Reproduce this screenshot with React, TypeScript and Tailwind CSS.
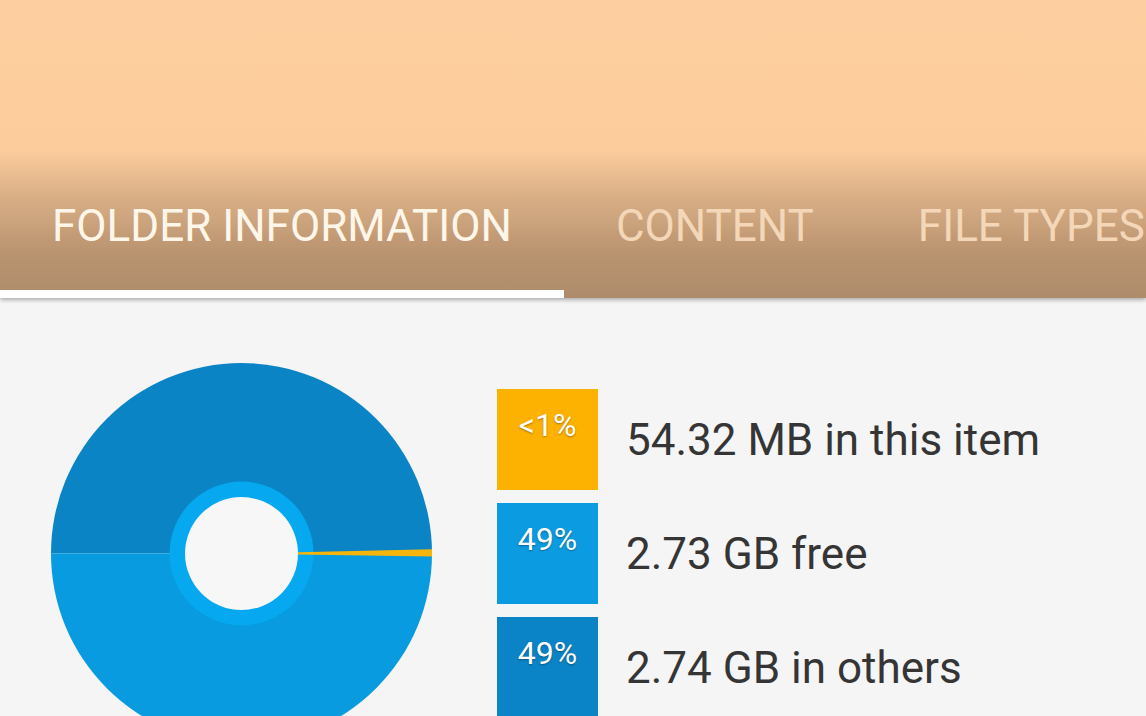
import React from "react";

const font = { fontFamily: "Roboto, 'Liberation Sans', sans-serif" };

function Donut() {
  const cx = 190.5;
  const cy = 190.5;
  const r = 190.5;
  const ri = 56.5;
  const a1 = (-1.3 * Math.PI) / 180;
  const a2 = (0.9 * Math.PI) / 180;
  const p = (rad: number, a: number) => `${cx + rad * Math.cos(a)} ${cy + rad * Math.sin(a)}`;
  return (
    <svg width="381" height="381" viewBox="0 0 381 381" className="shrink-0">
      <path d={`M0 ${cy} A${r} ${r} 0 0 1 381 ${cy} Z`} fill="#0A84C4" />
      <path d={`M0 ${cy} A${r} ${r} 0 0 0 381 ${cy} Z`} fill="#089BDF" />
      <circle cx={cx} cy={cy} r="72" fill="#06A8F0" />
      <path
        d={`M${p(ri, a1)} L${p(r, a1)} A${r} ${r} 0 0 1 ${p(r, a2)} L${p(ri, a2)} Z`}
        fill="#F5B50A"
      />
      <circle cx={cx} cy={cy} r={ri} fill="#F7F7F7" />
    </svg>
  );
}

const items = [
  { pct: "<1%", label: "54.32 MB in this item", bg: "bg-[#FDB100]" },
  { pct: "49%", label: "2.73 GB free", bg: "bg-[#0A9BE1]" },
  { pct: "49%", label: "2.74 GB in others", bg: "bg-[#0A84C6]" },
];

export default function App() {
  return (
    <div className="w-[1146px] h-[716px] overflow-hidden bg-[#F5F5F5] flex flex-col" style={font}>
      <div className="relative z-10 h-[298px] shrink-0 flex flex-col justify-end bg-[linear-gradient(to_bottom,#FDCE9F_0px,#FCCC9C_150px,#D7AD85_200px,#BA9470_252px,#AE8C6B_298px)] shadow-[0_2px_4px_rgba(0,0,0,0.3)]">
        <div className="flex whitespace-nowrap">
          <div className="flex flex-col shrink-0">
            <div className="px-[52px] pb-[42px] text-[44px] leading-none text-[#FFF6EA]">FOLDER INFORMATION</div>
            <div className="h-[8px] bg-white" />
          </div>
          <div className="flex flex-col shrink-0">
            <div className="px-[52px] pb-[42px] text-[44px] leading-none text-[#F3D7B8]">CONTENT</div>
            <div className="h-[8px]" />
          </div>
          <div className="flex flex-col shrink-0">
            <div className="px-[52px] pb-[42px] text-[44px] leading-none text-[#F3D7B8]">FILE TYPES</div>
            <div className="h-[8px]" />
          </div>
        </div>
      </div>
      <div className="flex pt-[65px] pl-[51px] gap-[65px]">
        <Donut />
        <div className="flex flex-col gap-[13px] mt-[26px]">
          {items.map((it, i) => (
            <div key={i} className="flex items-center gap-[28px]">
              <div className={`w-[101px] h-[101px] shrink-0 ${it.bg} flex justify-center pt-[20px]`}>
                <span className="text-[32px] leading-none text-white [text-shadow:0_1px_2px_rgba(0,0,0,0.35)]">{it.pct}</span>
              </div>
              <div className="text-[44px] text-[#353535] whitespace-nowrap">{it.label}</div>
            </div>
          ))}
        </div>
      </div>
    </div>
  );
}
